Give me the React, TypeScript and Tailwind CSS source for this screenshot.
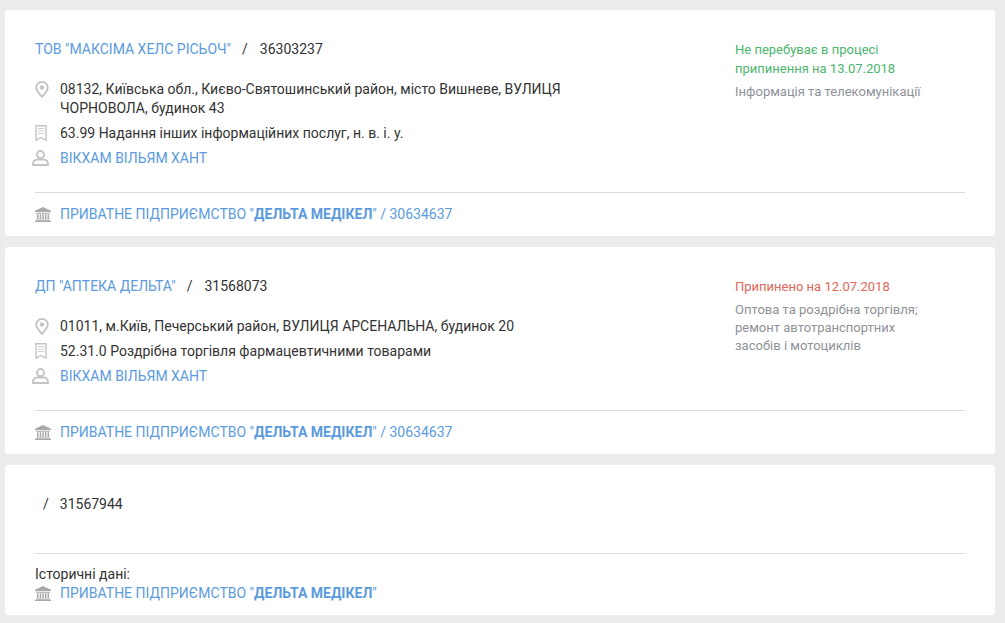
import React from 'react';

function PinIcon() {
  return (
    <svg width="14" height="17" viewBox="0 0 14 17" fill="none" className="block">
      <path d="M7 1C3.700 1 1.200 3.500 1.200 6.600 1.200 10 4.800 13.200 7 15.800c2.200-2.600 5.800-5.800 5.800-9.200C12.800 3.500 10.300 1 7 1z" stroke="#c4c4c4" strokeWidth="1.900" />
      <circle cx="7" cy="6.500" r="2.200" fill="#c4c4c4" />
    </svg>
  );
}

function BookmarkIcon() {
  return (
    <svg width="12" height="16" viewBox="0 0 12 16" fill="none" className="block">
      <path d="M1 .7h10v14.600l-5-2.800-5 2.800z" stroke="#c4c4c4" strokeWidth="1.400" />
      <path d="M3 3.500h6M3 6h6M3 8.500h6" stroke="#d0d0d0" strokeWidth="1" />
    </svg>
  );
}

function UserIcon() {
  return (
    <svg width="17" height="16" viewBox="0 0 17 16" fill="none" className="block">
      <circle cx="8.500" cy="4.600" r="3.600" stroke="#c4c4c4" strokeWidth="1.900" />
      <path d="M1 14.200c0-3 2-4.700 4-4.700h7c2 0 4 1.700 4 4.700v.800H1z" stroke="#c4c4c4" strokeWidth="1.900" strokeLinejoin="round" />
    </svg>
  );
}

function BankIcon() {
  return (
    <svg width="16" height="15" viewBox="0 0 16 15" fill="#a9a9a9" className="block">
      <path d="M8 0 16 3.800V5H0V3.800z" />
      <path d="M1 5.800h14v.900H1zM2 7.200h1.500v4.800H2zM4.700 7.200h1.500v4.800H4.700zM7.300 7.200h1.500v4.800H7.300zM9.900 7.200h1.500v4.800H9.900zM12.500 7.200H14v4.800h-1.500zM1 12.400h14v1H1zM0 13.800h16V15H0z" />
    </svg>
  );
}

function Row({ icon, children }: { icon: React.ReactNode; children: React.ReactNode }) {
  return (
    <div className="flex">
      <div className="w-[25px] shrink-0 pt-px">{icon}</div>
      <div className="min-w-0 flex-1">{children}</div>
    </div>
  );
}

function Founder({ bold, suffix }: { bold: string; suffix?: string }) {
  return (
    <div className="flex items-center h-[20px]">
      <div className="w-[25px] shrink-0"><BankIcon /></div>
      <a className="text-[#5b9bdd]">
        ПРИВАТНЕ ПІДПРИЄМСТВО "<b className="font-bold">{bold}</b>"{suffix}
      </a>
    </div>
  );
}

type Company = {
  name: string;
  code: string;
  address: React.ReactNode;
  kved: string;
  status: React.ReactNode;
  statusColor: string;
  branch: React.ReactNode;
};

const companies: Company[] = [
  {
    name: 'ТОВ "МАКСІМА ХЕЛС РІСЬОЧ"',
    code: '36303237',
    address: <>08132, Київська обл., Києво-Святошинський район, місто Вишневе, ВУЛИЦЯ<br />ЧОРНОВОЛА, будинок 43</>,
    kved: '63.99 Надання інших інформаційних послуг, н. в. і. у.',
    status: <>Не перебуває в процесі<br />припинення на 13.07.2018</>,
    statusColor: 'text-[#4cb56e]',
    branch: 'Інформація та телекомунікації',
  },
  {
    name: 'ДП "АПТЕКА ДЕЛЬТА"',
    code: '31568073',
    address: '01011, м.Київ, Печерський район, ВУЛИЦЯ АРСЕНАЛЬНА, будинок 20',
    kved: '52.31.0 Роздрібна торгівля фармацевтичними товарами',
    status: 'Припинено на 12.07.2018',
    statusColor: 'text-[#e0685a]',
    branch: <>Оптова та роздрібна торгівля;<br />ремонт автотранспортних<br />засобів і мотоциклів</>,
  },
];

function CompanyCard({ company }: { company: Company }) {
  return (
    <div className="bg-white rounded-[3px] px-[30px] pt-[29px]">
      <div className="flex justify-between">
        <div className="w-[560px]">
          <div className="h-[20px] leading-[20px]">
            <a className="text-[#5b9bdd]">{company.name}</a>
            <span className="ml-[11px]">/</span>
            <span className="ml-[12px]">{company.code}</span>
          </div>
          <div className="mt-[21px] flex flex-col gap-[6px]">
            <Row icon={<PinIcon />}><div className="leading-[19px]">{company.address}</div></Row>
            <Row icon={<BookmarkIcon />}><div className="leading-[19px]">{company.kved}</div></Row>
            <div className="-ml-[3px]">
              <Row icon={<UserIcon />}><a className="block ml-[3px] leading-[19px] text-[#5b9bdd]">ВІКХАМ ВІЛЬЯМ ХАНТ</a></Row>
            </div>
          </div>
        </div>
        <div className="w-[230px] text-[13px] leading-[18px]">
          <div className={company.statusColor + ' leading-[19px] mt-px'}>{company.status}</div>
          <div className="mt-[5px] text-[#8e9299]">{company.branch}</div>
        </div>
      </div>
      <div className="border-t border-[#dcdcdc] mt-[24px] pt-[11px] pb-[12px]">
        <Founder bold="ДЕЛЬТА МЕДІКЕЛ" suffix=" / 30634637" />
      </div>
    </div>
  );
}

export default function App() {
  return (
    <div className="min-h-[623px] bg-[#ececec] pl-[5px] pr-[10px] pt-[10px] pb-[8px] flex flex-col gap-[11px] text-[14px] text-[#333] font-['Roboto',sans-serif]">
      {companies.map((c) => (
        <CompanyCard key={c.code} company={c} />
      ))}
      <div className="bg-white rounded-[3px] px-[30px] pt-[29px] pb-[12px]">
        <div className="h-[20px] leading-[20px]">
          <span className="ml-[8px]">/</span>
          <span className="ml-[11px]">31567944</span>
        </div>
        <div className="border-t border-[#dcdcdc] mt-[39px] pt-[11px]">
          <div className="leading-[19px]">Історичні дані:</div>
          <div className="-mt-px">
            <Founder bold="ДЕЛЬТА МЕДІКЕЛ" />
          </div>
        </div>
      </div>
    </div>
  );
}
